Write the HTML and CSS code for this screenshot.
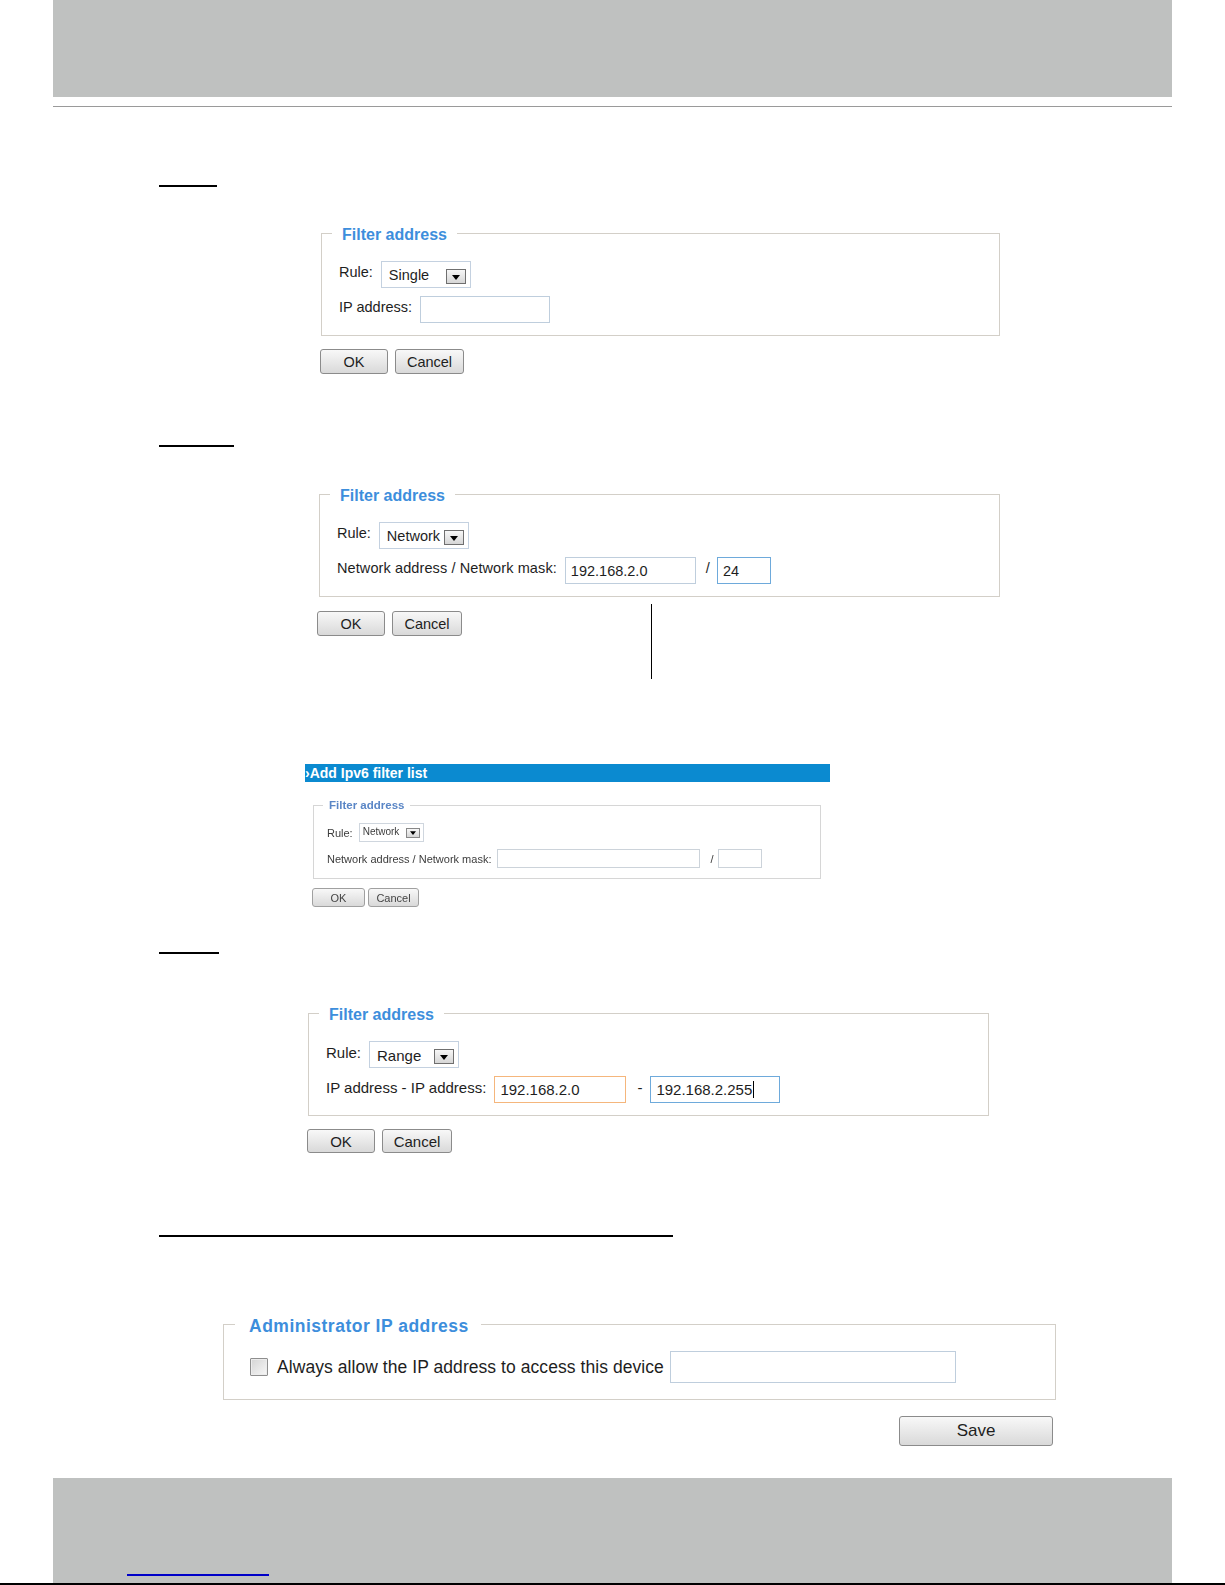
FILE: index.html
```html
<!DOCTYPE html>
<html lang="en">
<head>
<meta charset="utf-8">
<title>Filter address</title>
<link rel="stylesheet" href="styles.css">
</head>
<body>
<div class="page">
  <header class="band band-top"></header>
  <div class="top-rule"></div>

  <main class="doc">
    <div class="uline ul-1"></div>

    <section class="form-block fb-1">
      <fieldset class="fs">
        <legend>Filter address</legend>
        <div class="fs-body">
          <div class="row">
            <span class="lbl">Rule:</span>
            <div class="sel"><span class="sel-val">Single</span><span class="sel-btn"><svg viewBox="0 0 8 5"><path d="M0 0H8L4 5Z"/></svg></span></div>
          </div>
          <div class="row">
            <span class="lbl">IP address:</span>
            <div class="tb w130"></div>
          </div>
        </div>
      </fieldset>
      <div class="btns"><button class="btn">OK</button><button class="btn btn-cancel c69">Cancel</button></div>
    </section>

    <div class="uline ul-2"></div>

    <section class="form-block fb-2">
      <fieldset class="fs">
        <legend>Filter address</legend>
        <div class="fs-body">
          <div class="row">
            <span class="lbl">Rule:</span>
            <div class="sel"><span class="sel-val">Network</span><span class="sel-btn"><svg viewBox="0 0 8 5"><path d="M0 0H8L4 5Z"/></svg></span></div>
          </div>
          <div class="row">
            <span class="lbl lbl-net">Network address / Network mask:</span>
            <div class="tb w131">192.168.2.0</div>
            <span class="lbl sep-slash">/</span>
            <div class="tb w54 focus">24</div>
          </div>
        </div>
      </fieldset>
      <div class="btns"><button class="btn">OK</button><button class="btn btn-cancel">Cancel</button></div>
      <div class="leader"></div>
    </section>

    <figure class="shot">
      <div class="shot-bar">›Add Ipv6 filter list</div>
      <fieldset class="fs">
        <legend>Filter address</legend>
        <div class="fs-body">
          <div class="row">
            <span class="lbl">Rule:</span>
            <div class="sel"><span class="sel-val">Network</span><span class="sel-btn"><svg viewBox="0 0 8 5"><path d="M0 0H8L4 5Z"/></svg></span></div>
          </div>
          <div class="row">
            <span class="lbl">Network address / Network mask:</span>
            <div class="tb w203"></div>
            <span class="lbl sep-slash">/</span>
            <div class="tb w44"></div>
          </div>
        </div>
      </fieldset>
      <div class="btns"><button class="btn">OK</button><button class="btn btn-cancel">Cancel</button></div>
    </figure>

    <div class="uline ul-3"></div>

    <section class="form-block fb-3">
      <fieldset class="fs">
        <legend>Filter address</legend>
        <div class="fs-body">
          <div class="row">
            <span class="lbl">Rule:</span>
            <div class="sel"><span class="sel-val">Range</span><span class="sel-btn"><svg viewBox="0 0 8 5"><path d="M0 0H8L4 5Z"/></svg></span></div>
          </div>
          <div class="row">
            <span class="lbl">IP address - IP address:</span>
            <div class="tb w132 warm">192.168.2.0</div>
            <span class="lbl sep-dash">-</span>
            <div class="tb w130 focus">192.168.2.255<span class="caret"></span></div>
          </div>
        </div>
      </fieldset>
      <div class="btns"><button class="btn">OK</button><button class="btn btn-cancel">Cancel</button></div>
    </section>

    <div class="uline ul-4"></div>

    <section class="admin">
      <fieldset class="fs fs-admin">
        <legend>Administrator IP address</legend>
        <div class="admin-body">
          <input type="checkbox" class="chk" aria-label="Always allow">
          <span class="admin-text">Always allow the IP address to access this device</span>
          <div class="tb w286"></div>
        </div>
      </fieldset>
    </section>

    <div class="save-row"><button class="btn btn-save">Save</button></div>
  </main>

  <footer class="band band-bottom"><span class="foot-link"></span></footer>
  <div class="bottom-rule"></div>
</div>
</body>
</html>
```

FILE: styles.css
```css
* { box-sizing: border-box; }

html, body {
  margin: 0;
  overflow: hidden;
}

body {
  width: 1225px;
  height: 1585px;
  background: #fff;
  color: #1e1e1e;
  font-family: "Liberation Sans", Arial, sans-serif;
  font-size: 14.5px;
}

/* page bands */
.band {
  margin-left: 53px;
  width: 1119px;
  background: #bfc1c0;
}
.band-top { height: 97px; }
.top-rule {
  margin: 9px 0 0 53px;
  width: 1119px;
  height: 1px;
  background: #9a9a9a;
}

.band-bottom {
  height: 105px;
  margin-top: 32px;
  padding: 96px 0 0 74px;
}
.foot-link {
  display: block;
  width: 142px;
  height: 2px;
  background: #0000c8;
}
.bottom-rule {
  width: 1225px;
  height: 2px;
  background: #000;
}

/* underlines */
.uline {
  height: 2px;
  background: #000;
  margin-left: 159px;
}
.ul-1 { width: 58px; margin-top: 78px; }
.ul-2 { width: 75px; margin-top: 71px; }
.ul-3 { width: 60px; margin-top: 40px; }
.ul-4 { width: 514px; margin-top: 82px; }

/* form blocks */
.form-block { position: relative; }
.fb-1 { margin: 35px 0 0 320px; }
.fb-2 { margin: 36px 0 0 317px; }
.fb-3 { margin: 48px 0 0 307px; font-size: 15px; }

.fs {
  margin: 0;
  padding: 0;
  min-width: 0;
  border: 1px solid #d3cfc8;
}
.fb-1 .fs { margin-left: 1px; width: 679px; }
.fb-2 .fs { margin-left: 2px; width: 681px; }
.fb-3 .fs { margin-left: 1px; width: 681px; }

.fs legend {
  margin-left: 10px;
  padding: 4px 10px 0;
  font-size: 16px;
  line-height: 18px;
  font-weight: bold;
  color: #3d8edc;
}

.fs-body {
  display: flex;
  flex-direction: column;
  gap: 8px;
  padding: 17px 17px 12px;
}

.row {
  display: flex;
  align-items: flex-start;
  gap: 8px;
  height: 27px;
}

.lbl {
  padding-top: 3px;
  white-space: nowrap;
}
.lbl-net { letter-spacing: 0.1px; }
.sep-slash { margin: 0 -1px 0 2px; }
.sep-dash { margin-left: 3px; }

/* select look */
.sel {
  width: 90px;
  height: 27px;
  border: 1px solid #c4d1e0;
  background: #fff;
  display: flex;
  align-items: flex-end;
  justify-content: space-between;
  padding: 0 4px 3px 7px;
}
.sel-val { line-height: 17px; white-space: nowrap; }
.sel-btn {
  width: 20px;
  height: 15px;
  flex: none;
  border: 1px solid #6f6f6f;
  background: linear-gradient(#f7f7f7, #d6d6d6);
  display: flex;
  align-items: center;
  justify-content: center;
}
.sel-btn svg {
  width: 8px;
  height: 5px;
  margin-top: 2px;
  fill: #000;
}

/* text boxes */
.tb {
  height: 27px;
  border: 1px solid #bfcedd;
  background: #fff;
  padding: 0 5px;
  display: flex;
  align-items: center;
  white-space: nowrap;
}
.tb.focus { border-color: #6eaadb; }
.tb.warm { border-color: #f5b67c; }
.caret {
  display: inline-block;
  width: 1px;
  height: 17px;
  margin-left: 1px;
  background: #000;
}
.w44 { width: 44px; }
.w54 { width: 54px; }
.w130 { width: 130px; }
.w131 { width: 131px; }
.w132 { width: 132px; }
.w203 { width: 203px; }
.w286 { width: 286px; }

/* buttons */
.btns {
  display: flex;
  gap: 7px;
  margin-top: 13px;
}
.fb-2 .btns { margin-top: 14px; }

.btn {
  width: 68px;
  height: 25px;
  padding: 0;
  border: 1px solid #8b8b8b;
  border-radius: 3px;
  background: linear-gradient(#f8f8f8, #d9d9d9);
  color: #1e1e1e;
  font: inherit;
}
.btn-cancel { width: 70px; }
.btn-cancel.c69 { width: 69px; }
.fb-3 .btn { height: 24px; }

.leader {
  position: absolute;
  left: 334px;
  top: 121px;
  width: 1px;
  height: 75px;
  background: #000;
}

/* embedded ipv6 screenshot */
.shot {
  margin: 128px 0 0 305px;
  width: 525px;
  padding-bottom: 5px;
  filter: blur(0.3px);
  color: #3c3c3c;
}
.shot-bar {
  height: 18px;
  background: #0b8ad0;
  color: #fff;
  font-size: 14px;
  line-height: 18px;
  font-weight: bold;
  white-space: nowrap;
  overflow: hidden;
}
.shot .fs {
  margin: 16px 0 0 8px;
  width: 508px;
  border-color: #d6d6d6;
}
.shot .fs legend {
  margin-left: 9px;
  padding: 0 6px;
  font-size: 11.5px;
  line-height: 14px;
  color: #5a86c6;
}
.shot .fs-body {
  padding: 11px 13px 10px;
  gap: 7px;
  font-size: 11px;
}
.shot .row {
  height: 19px;
  gap: 6px;
  align-items: center;
}
.shot .lbl { padding-top: 0; }
.shot .sep-slash { margin: 0 -2px 0 4px; }
.shot .sel {
  width: 65px;
  height: 19px;
  padding: 0 3px 3px 3px;
  font-size: 10px;
  border-color: #cfd6de;
}
.shot .sel-val { line-height: 13px; }
.shot .sel-btn { width: 14px; height: 10px; border-color: #888; }
.shot .sel-btn svg { width: 6px; height: 4px; margin-top: 0; }
.shot .tb { height: 19px; border-color: #ccd3da; }
.shot .btns {
  margin: 9px 0 0 7px;
  gap: 3px;
}
.shot .btn {
  width: 53px;
  height: 19px;
  font-size: 11px;
  border-color: #a0a0a0;
  color: #444;
}
.shot .btn-cancel { width: 51px; }

/* administrator block */
.admin {
  margin: 75px 0 0 223px;
  width: 833px;
  font-size: 17.5px;
}
.fs-admin legend {
  margin-left: 11px;
  padding: 4px 12px 0 14px;
  font-size: 17.5px;
  line-height: 20px;
  letter-spacing: 0.5px;
}
.admin-body {
  display: flex;
  align-items: center;
  padding: 15px 16px 16px 26px;
}
.chk {
  appearance: none;
  -webkit-appearance: none;
  flex: none;
  width: 18px;
  height: 18px;
  margin: 0 9px 0 0;
  border: 1px solid #8e8e8e;
  border-radius: 1px;
  background: linear-gradient(135deg, #d4d4d4, #f7f7f7);
  box-shadow: inset 0 0 0 1px #ececec;
}
.admin-text {
  letter-spacing: 0.06px;
  white-space: nowrap;
  margin-right: 6px;
}
.admin .tb { height: 32px; flex: none; }

.save-row { margin: 16px 0 0 899px; }
.btn-save {
  width: 154px;
  height: 30px;
  font-size: 17px;
}
```
